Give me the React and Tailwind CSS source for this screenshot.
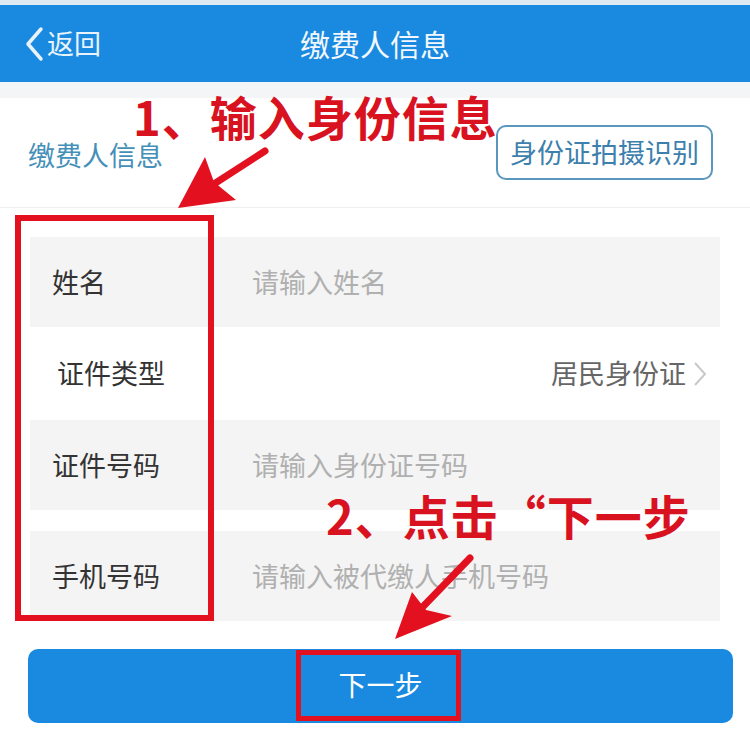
import React from 'react';

const font = { fontFamily: '"Noto Sans CJK SC", "Noto Sans", sans-serif' };

const Row = ({ label, placeholder, gray = true, className = '' }) => (
  <div className={`flex items-center h-[90px] ${gray ? 'bg-[#f4f4f4]' : ''} ${className}`}>
    <span className="w-[222px] pl-[22px] text-[27px] text-[#333]">{label}</span>
    <span className="text-[27px] text-[#b0b0b0]">{placeholder}</span>
  </div>
);

export default function App() {
  return (
    <div className="relative w-[750px] h-[735px] bg-white overflow-hidden" style={font}>
      <div className="h-[5px] bg-[#dfe9f1]" />
      <header className="relative flex items-center h-[77px] bg-[#1a8ae0] text-white">
        <div className="flex items-center pl-[24px]">
          <svg width="20" height="36" viewBox="0 0 20 36" className="mr-[3px]">
            <path d="M17 3 L4 18 L17 33" fill="none" stroke="#e8f3fc" strokeWidth="3.5" strokeLinecap="round" strokeLinejoin="round" />
          </svg>
          <span className="text-[27px] text-[#e8f3fc]">返回</span>
        </div>
        <h1 className="absolute left-0 right-0 text-center text-[30px] text-[#f2f8fd] pointer-events-none">缴费人信息</h1>
      </header>
      <div className="h-[16px] bg-[#f4f5f7]" />

      <div className="flex items-center justify-between h-[110px] pl-[28px] pr-[37px] border-b border-[#f0f0f0]">
        <span className="text-[27px] text-[#4590b8] mt-[6px]">缴费人信息</span>
        <button className="h-[55px] px-[12px] rounded-[10px] border-2 border-[#5b96bd] text-[27px] text-[#3d80ad]">
          身份证拍摄识别
        </button>
      </div>

      <div className="px-[30px] pt-[29px]">
        <Row label="姓名" placeholder="请输入姓名" />
        <div className="flex items-center h-[93px] pl-[27px] pr-[12px]">
          <span className="flex-1 text-[27px] text-[#333]">证件类型</span>
          <span className="text-[27px] text-[#666]">居民身份证</span>
          <svg width="16" height="26" viewBox="0 0 16 26" className="ml-[6px]">
            <path d="M3 2 L13 13 L3 24" fill="none" stroke="#c8c8c8" strokeWidth="2" />
          </svg>
        </div>
        <Row label="证件号码" placeholder="请输入身份证号码" />
        <Row label="手机号码" placeholder="请输入被代缴人手机号码" className="mt-[21px]" />
      </div>

      <div className="px-[28px] pt-[28px] pr-[17px]">
        <button className="w-full h-[74px] rounded-[10px] bg-[#1a8ae0] text-white text-[28px] pb-[4px]">下一步</button>
      </div>

      {/* annotations */}
      <div className="absolute left-[15px] top-[215px] w-[199px] h-[406px] border-[6px] border-[#e3101f]" />
      <div className="absolute left-[296px] top-[650px] w-[165px] h-[71px] border-[5px] border-[#e3101f]" />
      <div className="absolute left-[133px] top-[92px] text-[47px] font-bold text-[#d8121f] leading-none tracking-[1px]">1、输入身份信息</div>
      <div className="absolute left-[326px] top-[491px] text-[47px] font-bold text-[#d8121f] leading-none tracking-[1px]">2、点击“下一步</div>
      <svg className="absolute left-0 top-0 pointer-events-none" width="750" height="735" viewBox="0 0 750 735">
        <line x1="265" y1="151" x2="200" y2="193" stroke="#e3101f" strokeWidth="7" strokeLinecap="round" />
        <polygon points="178,208 205,157 214,182 236,200" fill="#e3101f" />
        <line x1="470" y1="558" x2="412" y2="618" stroke="#e3101f" strokeWidth="7" strokeLinecap="round" />
        <polygon points="395,639 412,592 426,610 452,616" fill="#e3101f" />
      </svg>
    </div>
  );
}
